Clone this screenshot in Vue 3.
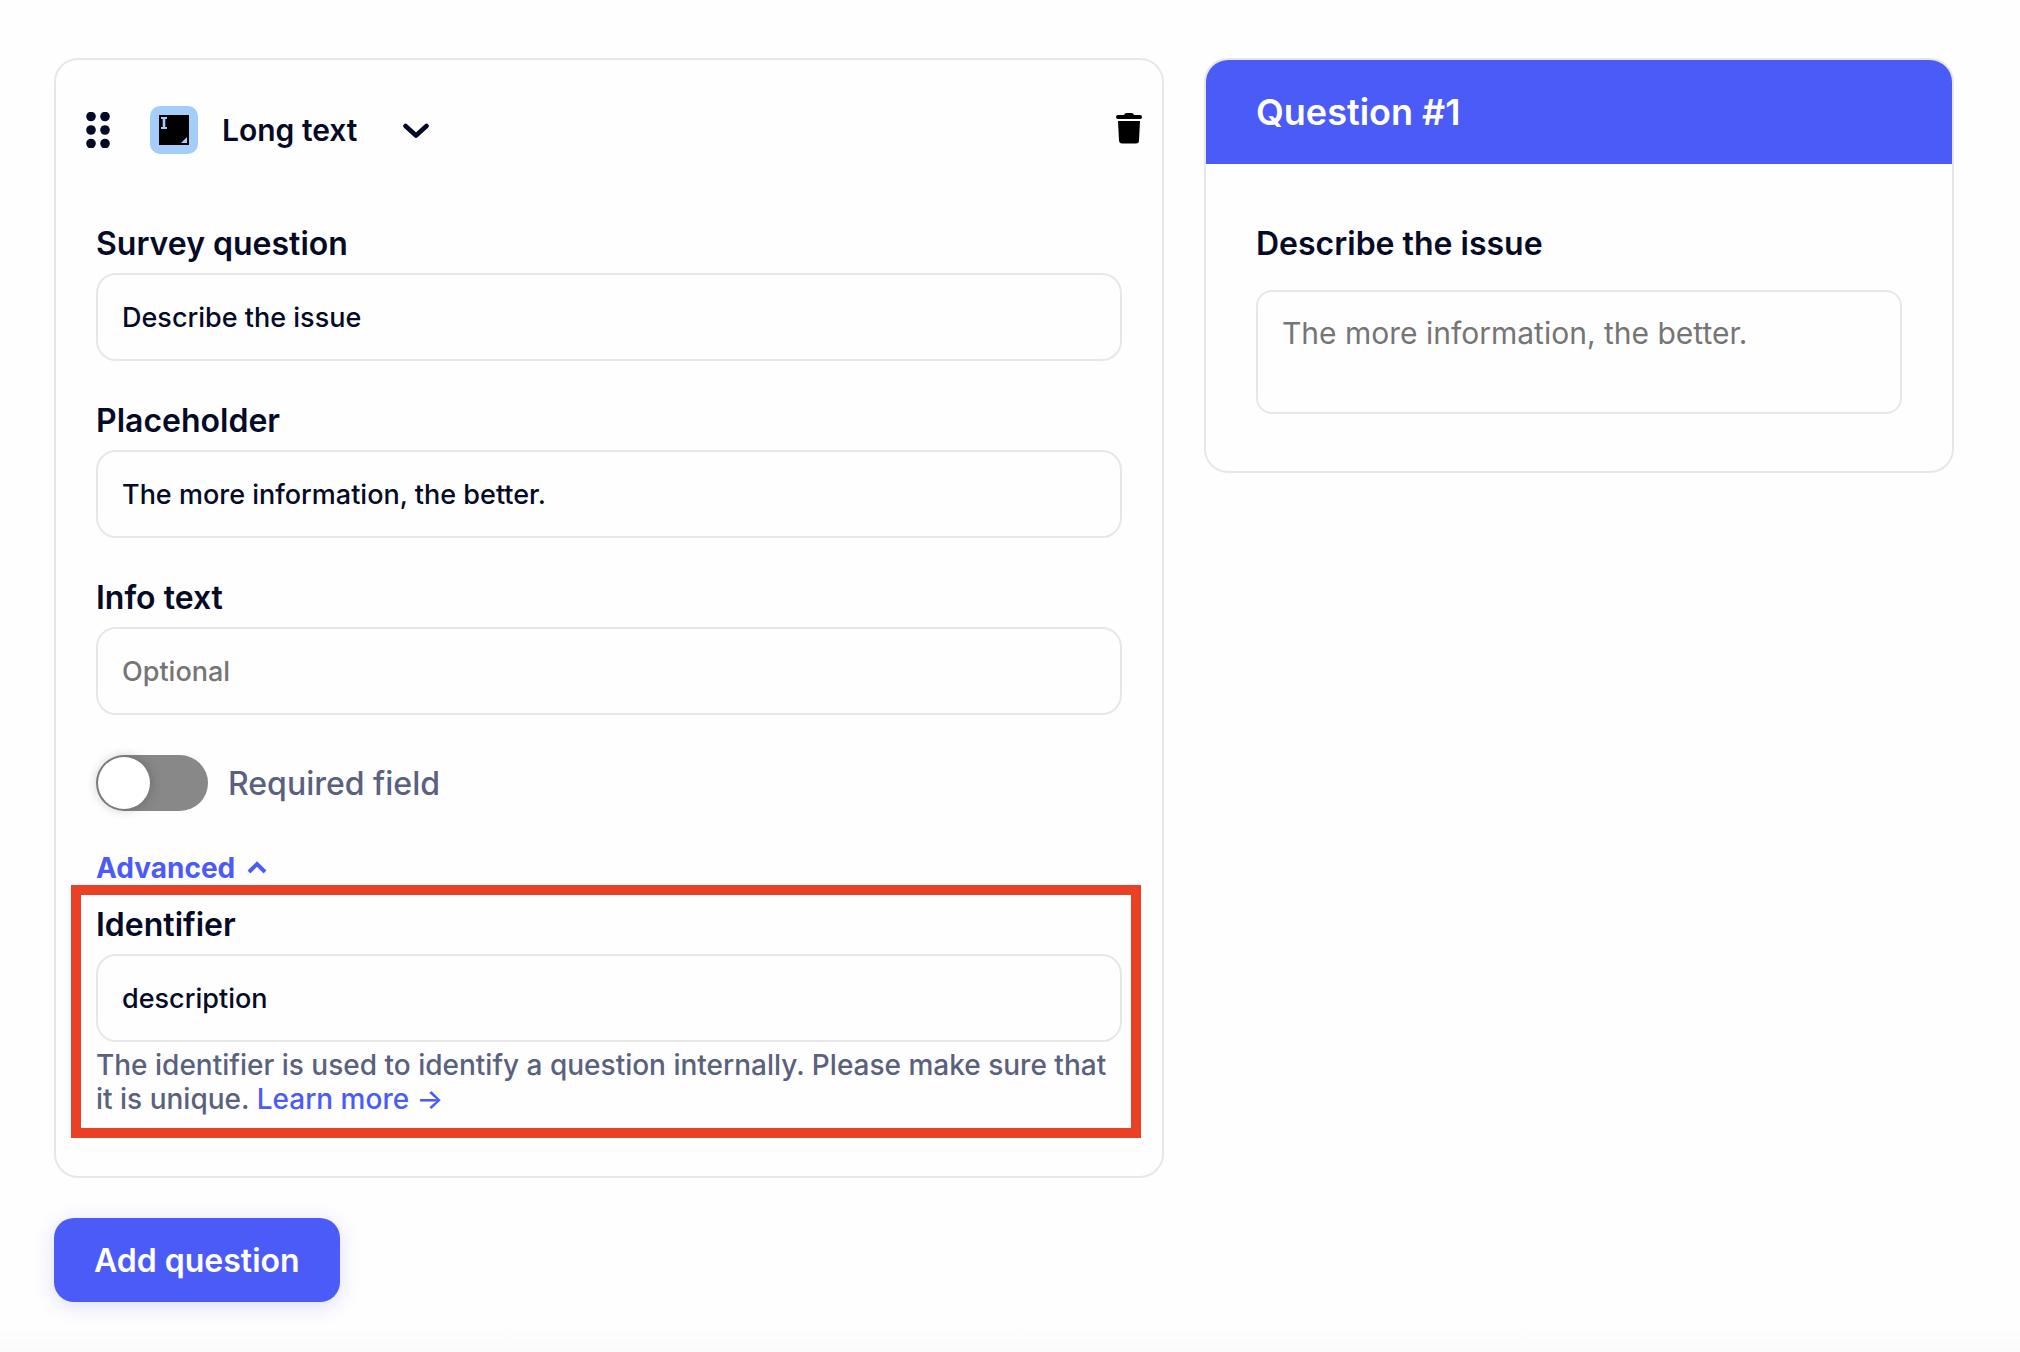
<script setup>
import { ref } from 'vue'

const type = ref('long')
const question = ref('Describe the issue')
const placeholder = ref('The more information, the better.')
const info = ref('')
const required = ref(false)
const advanced = ref(true)
const identifier = ref('description')
</script>

<template>
  <main class="page">
    <div class="builder">
      <section class="card editor">
        <header class="toolbar">
          <button class="icon-button drag" type="button" aria-label="Reorder question">
            <svg width="24" height="36" viewBox="0 0 24 36" fill="#050a26">
              <circle cx="5" cy="4.5" r="4.8" /><circle cx="19" cy="4.5" r="4.8" />
              <circle cx="5" cy="18" r="4.8" /><circle cx="19" cy="18" r="4.8" />
              <circle cx="5" cy="31.5" r="4.8" /><circle cx="19" cy="31.5" r="4.8" />
            </svg>
          </button>
          <svg class="tile" width="48" height="48" viewBox="0 0 48 48" aria-hidden="true">
            <rect width="48" height="48" rx="10" fill="#a5cdf9" />
            <rect x="9" y="9" width="30" height="30" fill="#000" />
            <path d="M11 12h6M11 22h6" fill="none" stroke="#a5cdf9" stroke-width="2" />
            <path d="M14 12v10" fill="none" stroke="#a5cdf9" stroke-width="2.6" />
            <path d="M37 31v6h-6z" fill="#a5cdf9" />
          </svg>
          <div class="type">
            <select v-model="type" aria-label="Question type">
              <option value="long">Long text</option>
              <option value="short">Short text</option>
            </select>
            <svg width="26" height="18" viewBox="0 0 26 18" fill="none" stroke="#050a26" stroke-width="4.6" stroke-linecap="round" stroke-linejoin="round" aria-hidden="true">
              <path d="M2.5 5 13 14.5 23.5 5" />
            </svg>
          </div>
          <button class="icon-button trash" type="button" aria-label="Delete question">
            <svg width="26" height="36" viewBox="0 0 26 36" fill="#000">
              <path d="M8 3Q8.5 1 10.5 1h5Q17.5 1 18 3h6Q26 3 26 5t-2 2H2Q0 7 0 5t2-2z" />
              <path d="M2 9h22l-1 19.5Q23 31.5 20 31.5H6Q3.3 31.5 3 28.5z" />
            </svg>
          </button>
        </header>

        <form class="form" @submit.prevent>
          <div class="field">
            <label for="question">Survey question</label>
            <input id="question" v-model="question" type="text" />
          </div>
          <div class="field">
            <label for="placeholder">Placeholder</label>
            <input id="placeholder" v-model="placeholder" type="text" />
          </div>
          <div class="field">
            <label for="info">Info text</label>
            <input id="info" v-model="info" type="text" placeholder="Optional" />
          </div>
          <div class="switch-row">
            <input id="required" v-model="required" class="switch" type="checkbox" role="switch" />
            <label for="required">Required field</label>
          </div>
          <div>
            <button class="advanced" type="button" :aria-expanded="advanced" @click="advanced = !advanced">
              Advanced
              <svg width="20" height="14" viewBox="0 0 20 14" fill="none" stroke="#4b5bf7" stroke-width="4" aria-hidden="true">
                <path d="M2 11 10 3 18 11" />
              </svg>
            </button>
            <div v-if="advanced" class="highlight">
              <div class="field">
                <label for="identifier">Identifier</label>
                <input id="identifier" v-model="identifier" type="text" aria-describedby="identifier-help" />
              </div>
              <p id="identifier-help" class="help">
                The identifier is used to identify a question internally. Please make sure that it is unique.
                <a href="#">Learn more →</a>
              </p>
            </div>
          </div>
        </form>
      </section>

      <section class="card preview">
        <h2>Question #1</h2>
        <div class="preview-body">
          <label for="answer">{{ question }}</label>
          <textarea id="answer" :placeholder="placeholder"></textarea>
        </div>
      </section>
    </div>

    <button class="add" type="button">Add question</button>
  </main>
</template>

<style>
body {
  margin: 0;
  background: #fefefe;
}
</style>

<style scoped>
* {
  box-sizing: border-box;
}

.page {
  min-height: 100vh;
  padding: 58px 66px 50px 54px;
  background: linear-gradient(to top, #fafafa, #fefefe 24px);
  color: #050a26;
  font-family: Inter, "Liberation Sans", sans-serif;
}

button,
input,
select,
textarea {
  margin: 0;
  font-family: inherit;
  color: inherit;
}

button {
  border: 0;
  padding: 0;
  background: none;
  cursor: pointer;
}

svg {
  display: block;
  flex: none;
}

.builder {
  display: grid;
  grid-template-columns: minmax(0, 37fr) minmax(0, 25fr);
  align-items: start;
  gap: 40px;
}

.card {
  border: 2px solid #e7e7e7;
  border-radius: 24px;
  background: #fefefe;
}

.editor {
  padding: 46px 40px 38px;
}

.toolbar {
  display: flex;
  align-items: center;
  height: 48px;
  margin: 0 -20px 70px -10px;
}

.tile {
  margin-left: 40px;
}

.type {
  display: flex;
  align-items: center;
  margin-left: 24px;
}

.type select {
  appearance: none;
  border: 0;
  padding: 0 64px 0 0;
  background: none;
  font-size: 30px;
  font-weight: 600;
  line-height: 40px;
}

.type svg {
  margin-left: -26px;
  pointer-events: none;
}

.trash {
  margin-left: auto;
}

.form {
  display: flex;
  flex-direction: column;
  gap: 40px;
}

.field {
  display: flex;
  flex-direction: column;
  gap: 10px;
}

.field label,
.preview label {
  font-size: 32px;
  font-weight: 600;
  line-height: 39px;
}

.field input {
  width: 100%;
  height: 88px;
  padding: 0 24px;
  border: 2px solid #e7e7e7;
  border-radius: 20px;
  background: #fefefe;
  font-size: 27px;
  font-weight: 500;
}

::placeholder {
  color: #757575;
  opacity: 1;
}

.switch-row {
  display: flex;
  align-items: center;
  gap: 20px;
  color: #5a617f;
  font-size: 32px;
  font-weight: 500;
}

.switch {
  appearance: none;
  width: 112px;
  height: 56px;
  padding: 2px;
  border-radius: 28px;
  background: #888;
}

.switch::before {
  content: "";
  display: block;
  width: 52px;
  height: 52px;
  border-radius: 50%;
  background: #fff;
  box-shadow: 0 0 12px rgb(0 0 0 / 25%);
}

.switch:checked {
  background: #4b5bf7;
}

.switch:checked::before {
  margin-left: auto;
}

.advanced {
  display: flex;
  align-items: center;
  gap: 12px;
  color: #4b5bf7;
  font-size: 28px;
  font-weight: 700;
  line-height: 34px;
}

.highlight {
  margin: 0 -19px 0 -25px;
  padding: 10px 9px 12px 15px;
  border: 10px solid #ea4025;
}

.help {
  margin: 6px 0 0;
  color: #5a617f;
  font-size: 28px;
  font-weight: 500;
  line-height: 34px;
}

.help a {
  color: #4b5bf7;
  text-decoration: none;
}

.preview {
  overflow: hidden;
}

.preview h2 {
  margin: 0;
  padding: 32px 50px;
  background: #4b5bf7;
  color: #fff;
  font-size: 36px;
  font-weight: 600;
  line-height: 40px;
}

.preview-body {
  display: flex;
  flex-direction: column;
  gap: 27px;
  padding: 60px 50px 57px;
}

.preview textarea {
  width: 100%;
  height: 124px;
  padding: 22px 24px;
  border: 2px solid #e7e7e7;
  border-radius: 16px;
  background: #fefefe;
  font-size: 30px;
  line-height: 39px;
  resize: none;
}

.add {
  display: block;
  margin-top: 40px;
  padding: 0 40px;
  height: 84px;
  border-radius: 20px;
  background: #4b5bf7;
  box-shadow: 0 4px 20px rgb(75 91 247 / 20%);
  color: #fff;
  font-size: 32px;
  font-weight: 600;
}
</style>
